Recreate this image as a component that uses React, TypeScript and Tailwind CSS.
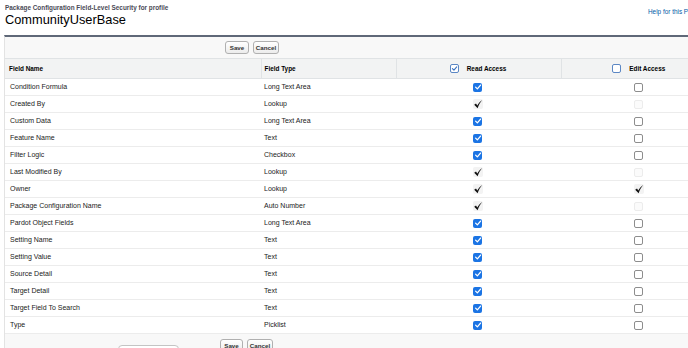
import React from "react";

type Access = "on" | "off" | "ro" | "dis";

const rows: [string, string, Access, Access][] = [
  ["Condition Formula", "Long Text Area", "on", "off"],
  ["Created By", "Lookup", "ro", "dis"],
  ["Custom Data", "Long Text Area", "on", "off"],
  ["Feature Name", "Text", "on", "off"],
  ["Filter Logic", "Checkbox", "on", "off"],
  ["Last Modified By", "Lookup", "ro", "dis"],
  ["Owner", "Lookup", "ro", "ro"],
  ["Package Configuration Name", "Auto Number", "ro", "dis"],
  ["Pardot Object Fields", "Long Text Area", "on", "off"],
  ["Setting Name", "Text", "on", "off"],
  ["Setting Value", "Text", "on", "off"],
  ["Source Detail", "Text", "on", "off"],
  ["Target Detail", "Text", "on", "off"],
  ["Target Field To Search", "Text", "on", "off"],
  ["Type", "Picklist", "on", "off"],
];

const Tick: React.FC<{ className?: string }> = ({ className }) => (
  <svg viewBox="0 0 10 10" className={className}>
    <path d="M2 5.2 L4.2 7.4 L8.2 2.6" fill="none" stroke="currentColor" strokeWidth="1.6" strokeLinecap="round" strokeLinejoin="round" />
  </svg>
);

// read-only tick, drawn like the classic checkbox image
const RoTick = () => (
  <svg viewBox="0 0 10 10" className="w-[10px] h-[10px] text-[#111]">
    <path d="M1.2 5.8 L3 4.6 L4.3 6.4 C5.5 4.2 7 2.4 9.2 0.9 C7.4 3 5.8 5.6 4.6 9.2 Z" fill="currentColor" />
  </svg>
);

const Box: React.FC<{ state: Access }> = ({ state }) => {
  if (state === "on")
    return (
      <span className="w-[9px] h-[9px] rounded-[2px] bg-[#1b74e4] flex items-center justify-center">
        <Tick className="w-[8px] h-[8px] text-white" />
      </span>
    );
  if (state === "off")
    return <span className="w-[9px] h-[9px] rounded-[2px] border border-[#8d8d8d] bg-white" />;
  if (state === "ro")
    return (
      <span className="w-[10px] h-[10px] rounded-[2px] bg-[#f3f3f3] flex items-center justify-center">
        <RoTick />
      </span>
    );
  return <span className="w-[9px] h-[9px] rounded-[2px] border border-[#ececec] bg-[#fbfbfb]" />;
};

const Btn: React.FC<{ label: string; w: string }> = ({ label, w }) => (
  <button
    className={`${w} h-[13px] rounded-[3px] border border-[#b0b0b0] bg-gradient-to-b from-white to-[#ececec] text-[6.2px] font-bold text-[#333] flex items-center justify-center`}
  >
    {label}
  </button>
);

export default function App() {
  return (
    <div className="w-[688px] h-[348px] overflow-hidden bg-white font-['Liberation_Sans',Arial,sans-serif]">
      <div className="w-[720px]">
        {/* page title */}
        <div className="flex pl-[5px] pt-[4px]">
          <div className="w-[643px]">
            <div className="text-[6.4px] font-bold text-[#4a4a56] leading-[8px]">
              Package Configuration Field-Level Security for profile
            </div>
            <div className="text-[12.8px] text-black leading-[16px]">CommunityUserBase</div>
          </div>
          <div className="text-[6.4px] text-[#015ba7] pt-[3px] whitespace-nowrap">Help for this Page</div>
        </div>

        {/* block */}
        <div className="ml-[4px] mt-[7px] w-[713px] border-t-2 border-t-[#5f6878] border-x border-x-[#e3e3e3] bg-[#f8f8f8]">
          <div className="h-[21px] flex items-center gap-[4px] pl-[220px]">
            <Btn label="Save" w="w-[24px]" />
            <Btn label="Cancel" w="w-[26px]" />
          </div>

          <table className="w-full border-collapse table-fixed bg-white">
            <colgroup>
              <col className="w-[256px]" />
              <col className="w-[135px]" />
              <col className="w-[165px]" />
              <col />
            </colgroup>
            <thead>
              <tr className="h-[20px] bg-[#f2f3f3] border-y border-[#e0e3e5] text-[6.4px] font-bold text-black">
                <th className="text-left pl-[4px] border-r border-[#e0e3e5]">Field Name</th>
                <th className="text-left pl-[3px] border-r border-[#e0e3e5]">Field Type</th>
                <th className="border-r border-[#e0e3e5]">
                  <div className="flex items-center justify-center gap-[8px] pr-[1px]">
                    <span className="w-[9px] h-[9px] rounded-[2px] border border-[#5b87c4] bg-white flex items-center justify-center">
                      <Tick className="w-[7px] h-[7px] text-[#3d74c0]" />
                    </span>
                    <span>Read Access</span>
                  </div>
                </th>
                <th>
                  <div className="flex items-center justify-center gap-[8px]">
                    <span className="w-[9px] h-[9px] rounded-[2px] border border-[#5b87c4] bg-white" />
                    <span>Edit Access</span>
                  </div>
                </th>
              </tr>
            </thead>
            <tbody>
              {rows.map(([name, type, read, edit]) => (
                <tr key={name} className="h-[17px] border-b border-[#ececec] text-[7px] text-[#222]">
                  <td className="pl-[5px]">{name}</td>
                  <td className="pl-[3px]">{type}</td>
                  <td>
                    <div className="flex justify-center pr-[2px]">
                      <Box state={read} />
                    </div>
                  </td>
                  <td>
                    <div className="flex justify-center">
                      <Box state={edit} />
                    </div>
                  </td>
                </tr>
              ))}
            </tbody>
          </table>

          <div className="h-[30px] relative flex items-start gap-[4px] pl-[215px] pt-[5px]">
            <Btn label="Save" w="w-[23px]" />
            <Btn label="Cancel" w="w-[26px]" />
            <div className="absolute left-[113px] top-[11px] w-[61px] h-[14px] rounded-[4px] border border-[#c4c4c4] bg-white" />
          </div>
        </div>
      </div>
    </div>
  );
}
